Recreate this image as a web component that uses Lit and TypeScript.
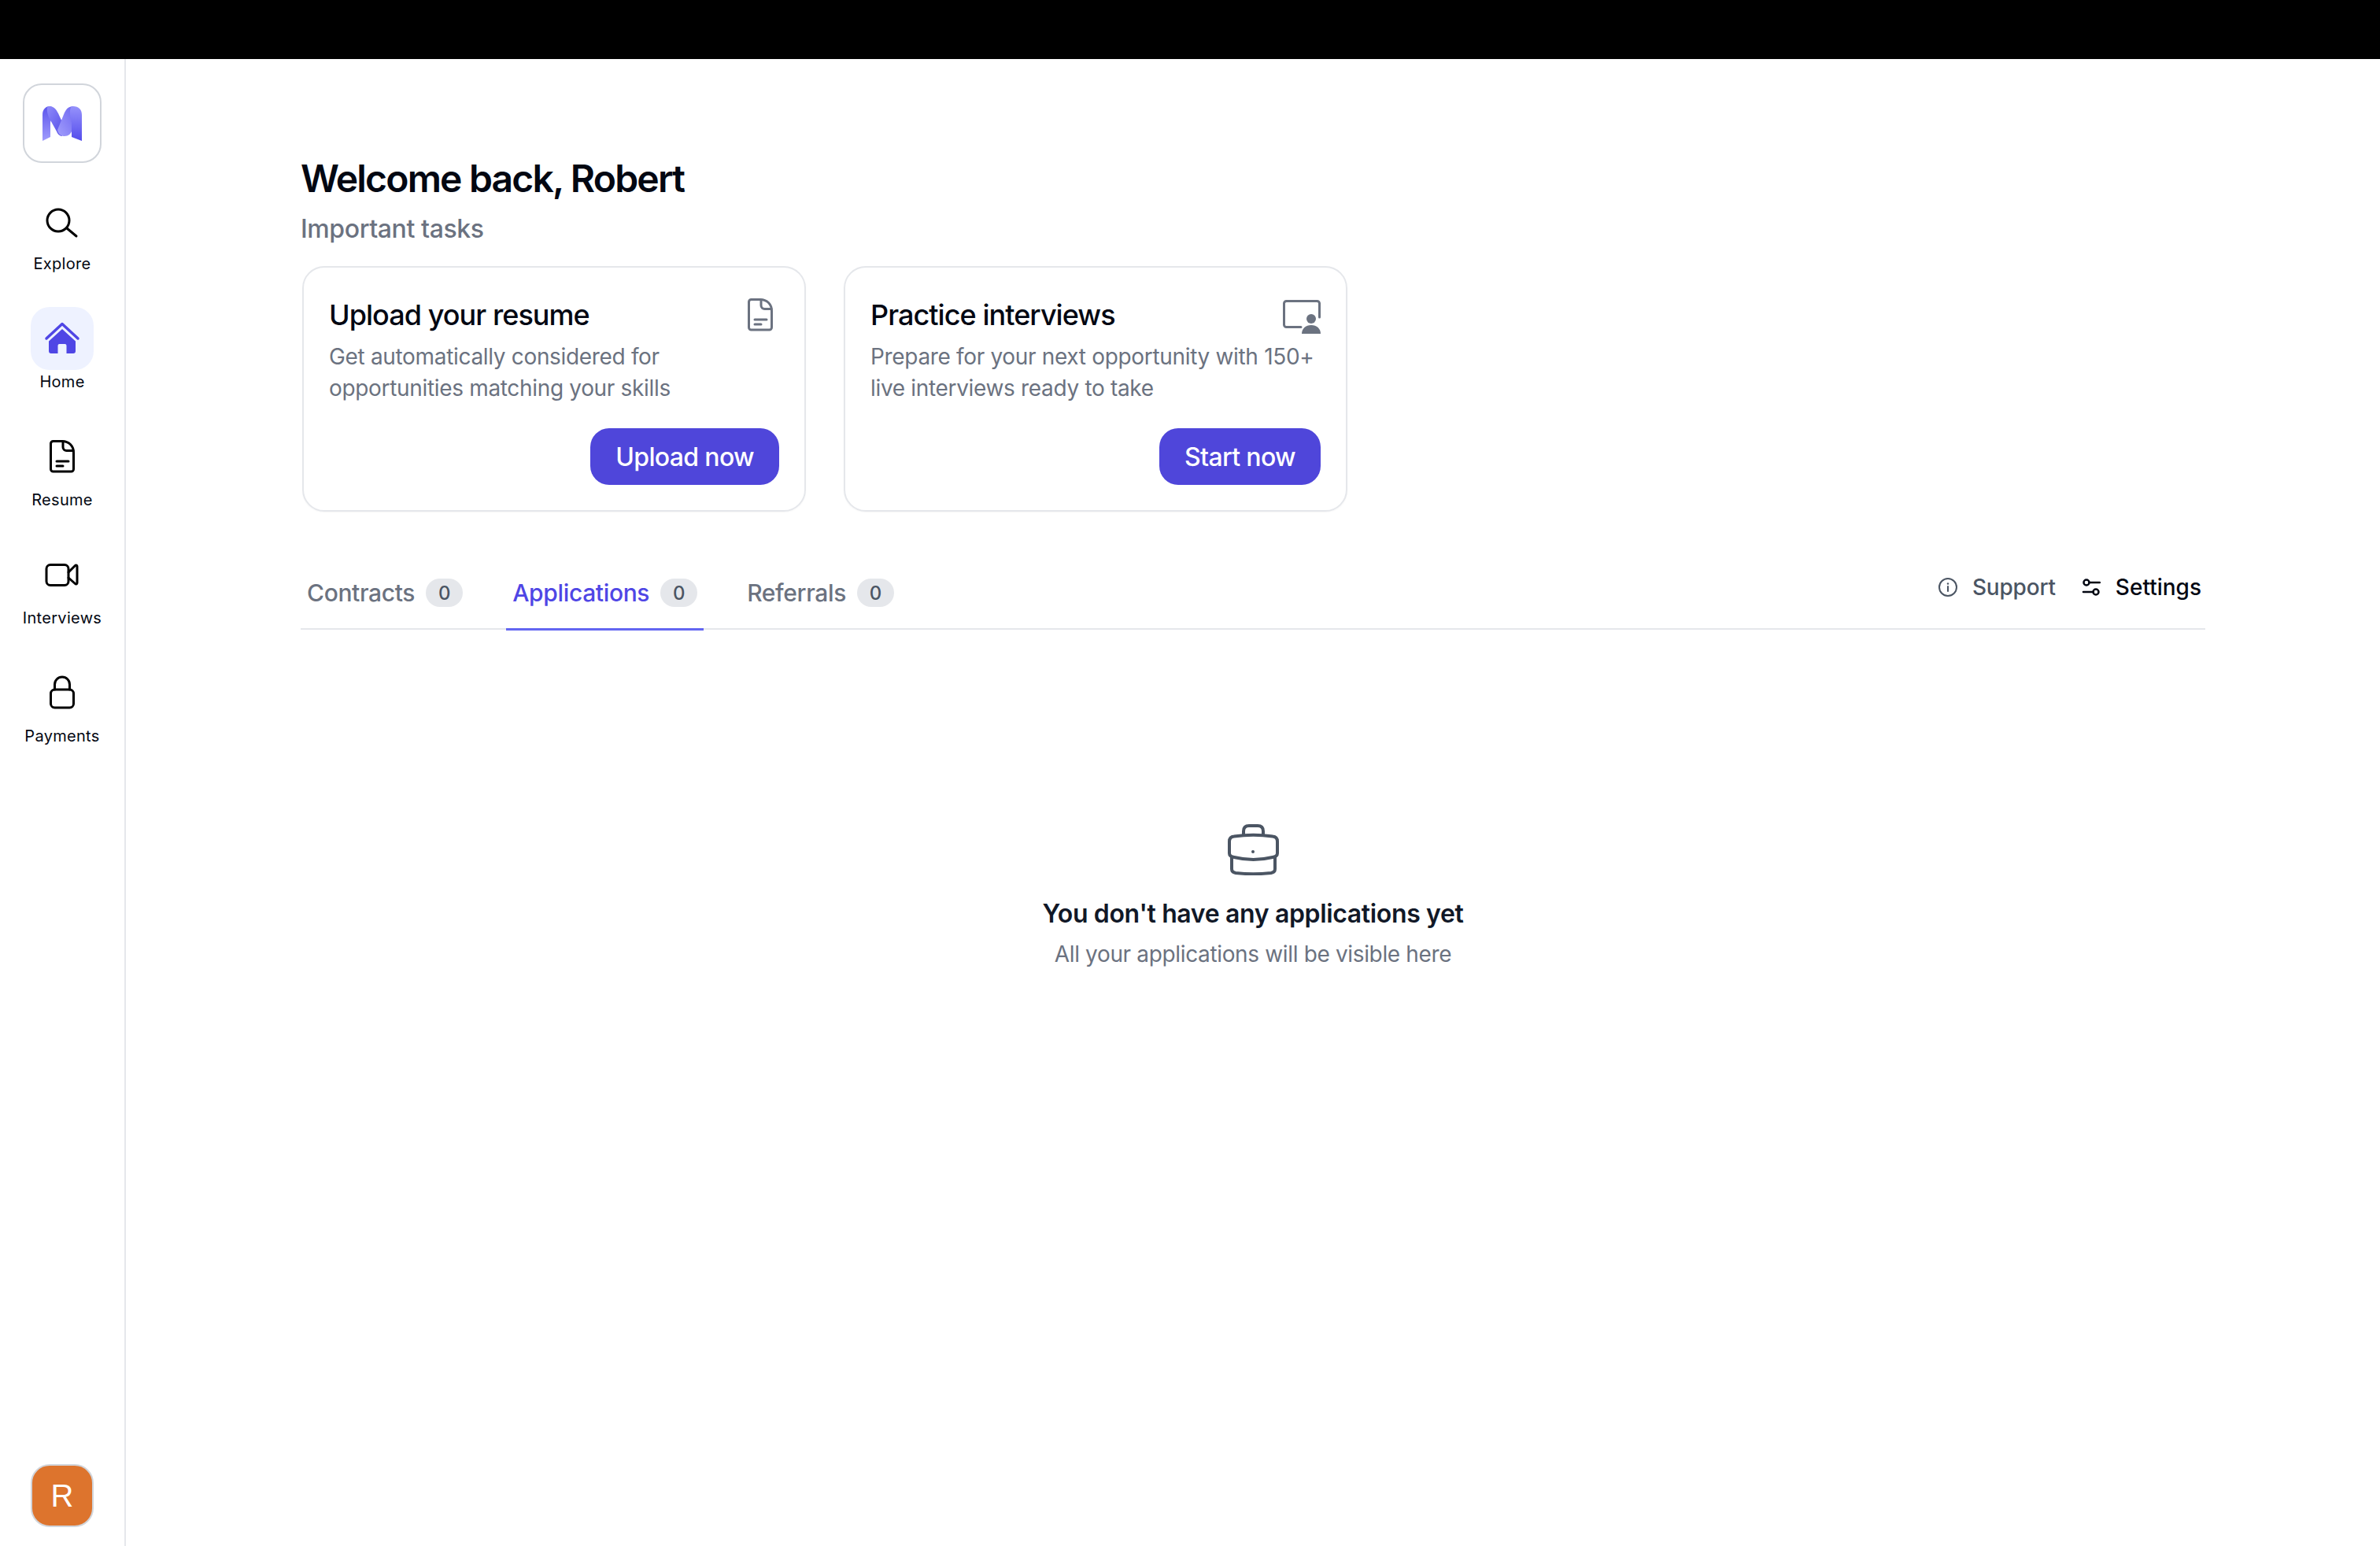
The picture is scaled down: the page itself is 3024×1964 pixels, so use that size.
import { LitElement, html, css, svg } from 'lit'
import { customElement } from 'lit/decorators.js'
import { classMap } from 'lit/directives/class-map.js'

const docIcon = svg`
	<path d="M12.5 4.5H24c8.5 0 14.5 6 14.5 14.5v21a3 3 0 0 1-3 3h-23a3 3 0 0 1-3-3V7.5a3 3 0 0 1 3-3z" />
	<path d="M25 5v7a4.5 4.5 0 0 0 4.5 4.5H38" />
	<path d="M17 30h15M17 36h8" />
`

const navItems = [
	{
		label: 'Explore',
		icon: svg`<circle cx="19" cy="24" r="14" /><path d="M30 34l12 10" />`,
	},
	{
		label: 'Home',
		active: true,
		icon: svg`
			<path d="M4 24L24 5.5 44 24" stroke-width="3.5" />
			<path class="solid" d="M7 27.5L24 12l17 15.5V40a3 3 0 0 1-3 3h-8.5V33a2 2 0 0 0-2-2h-7a2 2 0 0 0-2 2v10H10a3 3 0 0 1-3-3z" />
		`,
	},
	{ label: 'Resume', icon: docIcon },
	{
		label: 'Interviews',
		icon: svg`
			<rect x="4" y="11.5" width="28" height="26" rx="5" />
			<path d="M32 21l8.5-8.5c1-1 2.5-.4 2.5 1v21c0 1.4-1.5 2-2.5 1L32 28" />
		`,
	},
	{
		label: 'Payments',
		icon: svg`
			<rect x="9.5" y="20" width="29" height="23" rx="5" />
			<path d="M14.5 20v-6.5a9.5 9.5 0 0 1 19 0V20" />
		`,
	},
]

const tabs = [
	{ label: 'Contracts', count: 0 },
	{ label: 'Applications', count: 0, active: true },
	{ label: 'Referrals', count: 0 },
]

const screenIcon = svg`
	<path d="M23 39.5H4.5a3 3 0 0 1-3-3V9.5a3 3 0 0 1 3-3h39a3 3 0 0 1 3 3V27" />
	<circle class="solid" cx="36" cy="29" r="6" />
	<path class="solid" d="M24 48c0-6.5 5-11 12-11s12 4.5 12 11z" />
`

const cards = [
	{
		title: 'Upload your resume',
		text: ['Get automatically considered for', 'opportunities matching your skills'],
		action: 'Upload now',
		icon: docIcon,
	},
	{
		title: 'Practice interviews',
		text: ['Prepare for your next opportunity with 150+', 'live interviews ready to take'],
		action: 'Start now',
		icon: screenIcon,
	},
]

@customElement('app-root')
export class AppRoot extends LitElement {
	static styles = css`
		:host {
			display: block;
			height: 1964px;
			overflow: hidden;
			background: #fff;
			font-family: Inter, 'Noto Sans', sans-serif;
			color: #030712;
		}
		* {
			box-sizing: border-box;
		}
		.topbar {
			height: 75px;
			background: #000;
		}
		.shell {
			display: flex;
			height: 1889px;
		}
		.sidebar {
			flex: 0 0 160px;
			display: flex;
			flex-direction: column;
			align-items: center;
			padding: 31px 0 24px;
			border-right: 2px solid #e5e7eb;
		}
		.logo {
			width: 100px;
			height: 101px;
			display: flex;
			align-items: center;
			justify-content: center;
			border: 2px solid #d1d5db;
			border-radius: 24px;
			margin-bottom: 33px;
		}
		.nav {
			display: flex;
			flex-direction: column;
			gap: 41px;
		}
		.nav-item {
			display: flex;
			flex-direction: column;
			align-items: center;
			width: 120px;
			font-size: 20px;
			line-height: 28px;
			letter-spacing: 0.3px;
			color: #030712;
		}
		.nav-icon {
			width: 80px;
			height: 80px;
			margin-bottom: 1px;
			display: flex;
			align-items: center;
			justify-content: center;
			border-radius: 24px;
			color: #000;
		}
		.nav-item.active .nav-icon {
			background: #eef2ff;
			color: #4f46e5;
		}
		svg.line {
			fill: none;
			stroke: currentColor;
			stroke-width: 3;
			stroke-linecap: round;
			stroke-linejoin: round;
			display: block;
			flex: none;
		}
		svg.line .solid {
			fill: currentColor;
			stroke: none;
		}
		svg.thin {
			stroke-width: 2;
		}
		svg.mid {
			stroke-width: 2.5;
		}
		svg.thick {
			stroke-width: 4;
		}
		.avatar {
			margin-top: auto;
			width: 80px;
			height: 80px;
			display: flex;
			align-items: center;
			justify-content: center;
			border: 2px solid #d1d5db;
			border-radius: 24px;
			background: #dd742d;
			color: #fff;
			font-family: 'Liberation Sans', Arial, sans-serif;
			font-size: 40px;
		}
		.main {
			flex: 1;
			min-width: 0;
			padding: 122px 222px 0;
		}
		h1 {
			margin: 0;
			font-size: 48px;
			line-height: 60px;
			font-weight: 600;
			letter-spacing: -1.8px;
		}
		.subtitle {
			margin: 14px 0 27px;
			font-size: 32px;
			line-height: 40px;
			font-weight: 500;
			letter-spacing: -0.4px;
			color: #6b7280;
		}
		.cards {
			display: flex;
			gap: 48px;
			padding-left: 2px;
		}
		.card {
			width: 640px;
			height: 312px;
			padding: 32px;
			border: 2px solid #e5e7eb;
			border-radius: 28px;
			display: flex;
			flex-direction: column;
			box-shadow: 0 1px 2px rgba(0, 0, 0, 0.04);
		}
		.card-head {
			display: flex;
			justify-content: space-between;
			align-items: flex-start;
			color: #6b7280;
		}
		.card-head svg {
			margin-top: 4px;
		}
		h2 {
			margin: 0;
			font-size: 36px;
			line-height: 56px;
			font-weight: 500;
			letter-spacing: -0.95px;
			color: #030712;
		}
		.card p {
			margin: 5px 0 0;
			font-size: 28px;
			line-height: 40px;
			letter-spacing: -0.33px;
			color: #6b7280;
			white-space: nowrap;
		}
		.card button {
			align-self: flex-end;
			margin-top: auto;
			height: 72px;
			padding: 2px 32px 0;
			border: 0;
			border-radius: 24px;
			background: #4f46da;
			color: #fff;
			font: 500 32px/40px Inter, sans-serif;
			letter-spacing: -0.65px;
		}
		.tabbar {
			display: flex;
			justify-content: space-between;
			align-items: flex-start;
			margin-top: 80px;
			border-bottom: 2px solid #e5e7eb;
		}
		.tabs {
			display: flex;
			gap: 47px;
			margin-top: 5px;
		}
		.tab {
			display: flex;
			align-items: center;
			gap: 14px;
			height: 66px;
			margin-bottom: -3px;
			padding: 0 8px 27px;
			border-bottom: 3px solid transparent;
			font-size: 30px;
			font-weight: 500;
			letter-spacing: -0.35px;
			color: #6b7280;
		}
		.tab.active {
			color: #4f46e5;
			border-bottom-color: #6366f1;
		}
		.count {
			width: 47px;
			height: 36px;
			display: flex;
			align-items: center;
			justify-content: center;
			border-radius: 18px;
			background: #e5e7eb;
			font-size: 24px;
			font-weight: 500;
			letter-spacing: 0;
			color: #4b5563;
		}
		.links {
			display: flex;
			gap: 33px;
			padding-right: 5px;
		}
		.link {
			display: flex;
			align-items: center;
			gap: 19px;
			font-size: 28px;
			line-height: 32px;
			font-weight: 500;
			letter-spacing: -0.2px;
			color: #4b5563;
		}
		.link.dark {
			color: #030712;
			letter-spacing: 0;
		}
		.empty {
			display: flex;
			flex-direction: column;
			align-items: center;
			margin-top: 247px;
			color: #4b5563;
		}
		.empty h3 {
			margin: 27px 0 0;
			font-size: 32px;
			line-height: 44px;
			font-weight: 600;
			letter-spacing: -0.35px;
			color: #111827;
		}
		.empty p {
			margin: 9px 0 0;
			font-size: 28px;
			line-height: 40px;
			letter-spacing: -0.35px;
			color: #6b7280;
		}
	`

	render() {
		return html`
			<div class="topbar"></div>
			<div class="shell">
				<aside class="sidebar">
					<div class="logo">${this.renderLogo()}</div>
					<nav class="nav">
						${navItems.map(
							(item) => html`
								<div class=${classMap({ 'nav-item': true, active: !!item.active })}>
									<div class="nav-icon">
										<svg class="line" width="48" height="48" viewBox="0 0 48 48">${item.icon}</svg>
									</div>
									${item.label}
								</div>
							`,
						)}
					</nav>
					<div class="avatar">R</div>
				</aside>
				<main class="main">
					<h1>Welcome back, Robert</h1>
					<div class="subtitle">Important tasks</div>
					<div class="cards">
						${cards.map(
							(card) => html`
								<section class="card">
									<div class="card-head">
										<h2>${card.title}</h2>
										<svg class="line" width="48" height="48" viewBox="0 0 48 48">${card.icon}</svg>
									</div>
									<p>${card.text[0]}<br />${card.text[1]}</p>
									<button>${card.action}</button>
								</section>
							`,
						)}
					</div>
					<div class="tabbar">
						<div class="tabs">
							${tabs.map(
								(tab) => html`
									<div class=${classMap({ tab: true, active: !!tab.active })}>
										${tab.label}<span class="count">${tab.count}</span>
									</div>
								`,
							)}
						</div>
						<div class="links">
							<div class="link">
								<svg class="line thin" width="24" height="24" viewBox="0 0 24 24">
									<circle cx="12" cy="12" r="11" />
									<path d="M12 11v6" />
									<circle class="solid" cx="12" cy="7.5" r="1.2" />
								</svg>
								Support
							</div>
							<div class="link dark">
								<svg class="line mid" width="24" height="24" viewBox="0 0 24 24">
									<circle cx="6" cy="6" r="3.5" />
									<path d="M10 6h13M2 18h13" />
									<circle cx="18" cy="18" r="3.5" />
								</svg>
								Settings
							</div>
						</div>
					</div>
					<div class="empty">
						<svg class="line thick" width="65" height="65" viewBox="0 0 65 65">
							<path d="M20 14V9q0-7 7-7h11q7 0 7 7v5" />
							<path d="M2 22q0-6 6-6.5 24.5-3.5 49 0 6 .5 6 6.5v15q0 4-6 5-24.5 6-49 0-6-1-6-5z" />
							<path d="M5 42v15q0 4 5 5 22 2.5 45 0 5-1 5-5V42" />
							<circle class="solid" cx="32" cy="35" r="2" />
						</svg>
						<h3>You don't have any applications yet</h3>
						<p>All your applications will be visible here</p>
					</div>
				</main>
			</div>
		`
	}

	renderLogo() {
		return html`
			<svg width="50" height="44" viewBox="0 0 50 44">
				<defs>
					<linearGradient id="legLeft" x1="0" y1="0" x2="0" y2="1">
						<stop offset="0" stop-color="#5c54ec" />
						<stop offset="1" stop-color="#a09cfc" />
					</linearGradient>
					<linearGradient id="legRight" x1="0" y1="0" x2="0" y2="1">
						<stop offset="0" stop-color="#9692fb" />
						<stop offset="1" stop-color="#544cec" />
					</linearGradient>
					<linearGradient id="ribbonLeft" x1="0" y1="0" x2="1" y2="1">
						<stop offset="0" stop-color="#8e8afa" />
						<stop offset="1" stop-color="#4f46e5" />
					</linearGradient>
					<linearGradient id="ribbonRight" x1="1" y1="0" x2="0" y2="1">
						<stop offset="0" stop-color="#6b64f0" />
						<stop offset="1" stop-color="#a29efc" />
					</linearGradient>
				</defs>
				<path fill="url(#legLeft)" d="M0 44V11C0 4 4 0 9 0c5 0 7 5 4 12l-3 8v19z" />
				<path fill="url(#ribbonLeft)" d="M8 0c6 0 9 3 12 9l11 24-7 5c-3-1-5-3-6-6L8 14C5 6 5 0 8 0z" />
				<path fill="url(#ribbonRight)" d="M40 0c-6 0-9 2-12 8L19 30c1 6 5 8 9 8 5 0 8-3 10-8l5-14z" />
				<path fill="url(#legRight)" d="M39 0c7 0 11 4 11 11v33l-13-5V21c-3-12-3-21 2-21z" />
			</svg>
		`
	}
}
